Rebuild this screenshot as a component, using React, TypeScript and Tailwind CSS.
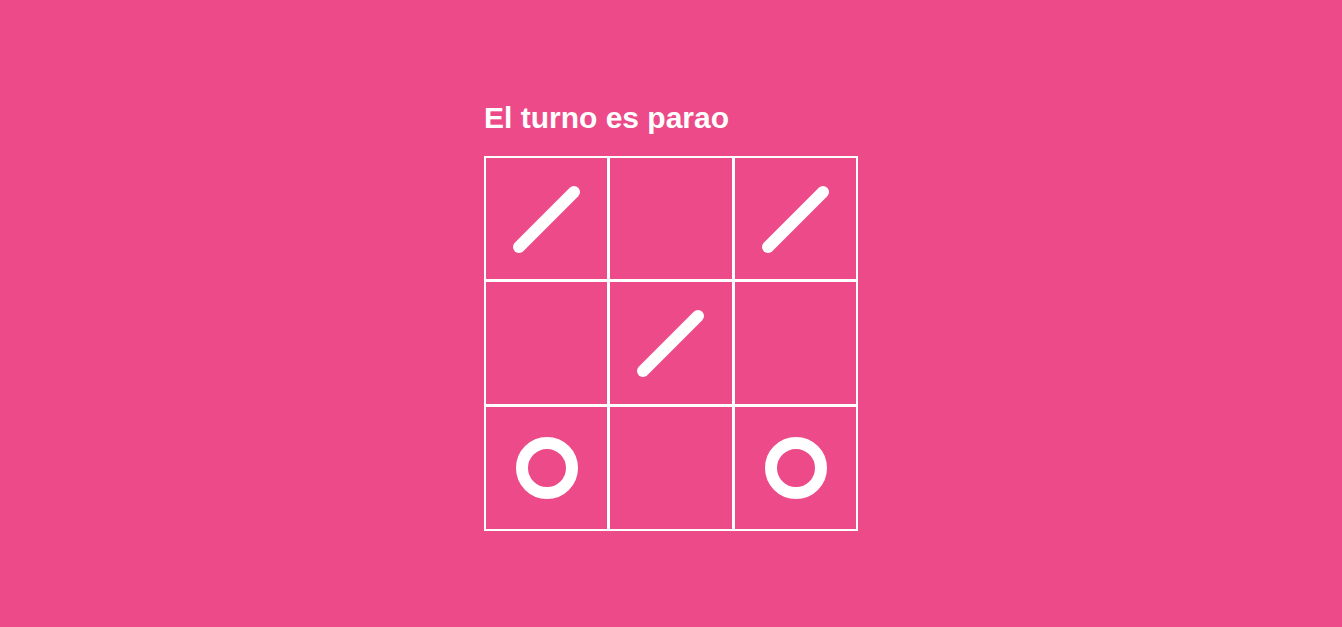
const board: ("X" | "O" | null)[] = ["X", null, "X", null, "X", null, "O", null, "O"];

function Mark({ value }: { value: "X" | "O" | null }) {
  if (value === "X") {
    return (
      <svg width="80" height="80" viewBox="0 0 80 80">
        <line x1="12" y1="68" x2="67" y2="13" stroke="white" strokeWidth="12" strokeLinecap="round" />
      </svg>
    );
  }
  if (value === "O") {
    return (
      <svg width="80" height="80" viewBox="0 0 80 80">
        <circle cx="40" cy="40" r="25" fill="none" stroke="white" strokeWidth="12" />
      </svg>
    );
  }
  return null;
}

export default function App() {
  return (
    <div className="min-h-[627px] w-full bg-[#ec4a88] font-['Liberation_Sans',Arial,sans-serif]">
      <div className="flex flex-col items-center pt-[100px]">
        <div className="w-[374px]">
          <h1 className="mb-[20px] text-[30px] font-bold leading-[36px] text-white">El turno es parao</h1>
          <div className="grid grid-cols-[121px_122px_121px] grid-rows-[121px_122px_122px] gap-[3px] bg-white p-[2px]">
            {board.map((cell, i) => (
              <button key={i} className="flex items-center justify-center bg-[#ec4a88]">
                <Mark value={cell} />
              </button>
            ))}
          </div>
        </div>
      </div>
    </div>
  );
}
